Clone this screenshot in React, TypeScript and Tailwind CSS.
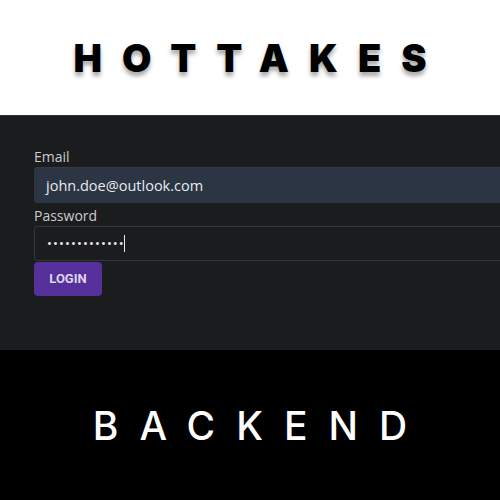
export default function App() {
  return (
    <div className="w-[500px] h-[500px] overflow-hidden flex flex-col bg-black">
      {/* title */}
      <div className="h-[115px] bg-white flex items-center justify-center">
        <h1 className="pl-[20px] font-['Inter',sans-serif] font-black text-[38px] leading-none tracking-[20px] text-black [text-shadow:0_4px_4px_rgba(0,0,0,0.35)]">
          HOTTAKES
        </h1>
      </div>

      {/* login form */}
      <div className="h-[235px] bg-[#1b1c1e] border-t border-[#333438] pl-[34px] pt-[31px] font-['Open_Sans',sans-serif]">
        <div className="w-[520px] flex flex-col">
          <label className="text-[14px] leading-[19px] text-[#c8cbcf]">Email</label>
          <div className="h-[36px] mt-px bg-[#2b3544] border-t border-[#333a44] rounded-l-[3px] flex items-center pl-[12px] text-[14.5px] text-[#e8eaed]">
            john.doe@outlook.com
          </div>
          <label className="mt-[3px] text-[14px] leading-[19px] text-[#c8cbcf]">Password</label>
          <div className="h-[35px] mt-px border border-[#34363a] rounded-l-[3px] flex items-center pl-[12px] text-[#e8eaed]">
            <span className="text-[13px] tracking-[1.1px] leading-none">•••••••••••••</span>
            <span className="w-px h-[17px] bg-[#e8eaed] -ml-px" />
          </div>
          <button className="mt-px w-[68px] h-[34px] bg-[#55309a] rounded-[4px] font-['Roboto',sans-serif] font-bold text-[13px] text-[#ddd6ea]">
            LOGIN
          </button>
        </div>
      </div>

      {/* footer */}
      <div className="flex-1 bg-black flex items-center justify-center">
        <h2 className="pl-[21px] font-['Inter',sans-serif] font-medium text-[39px] leading-none tracking-[21px] text-white">
          BACKEND
        </h2>
      </div>
    </div>
  );
}
